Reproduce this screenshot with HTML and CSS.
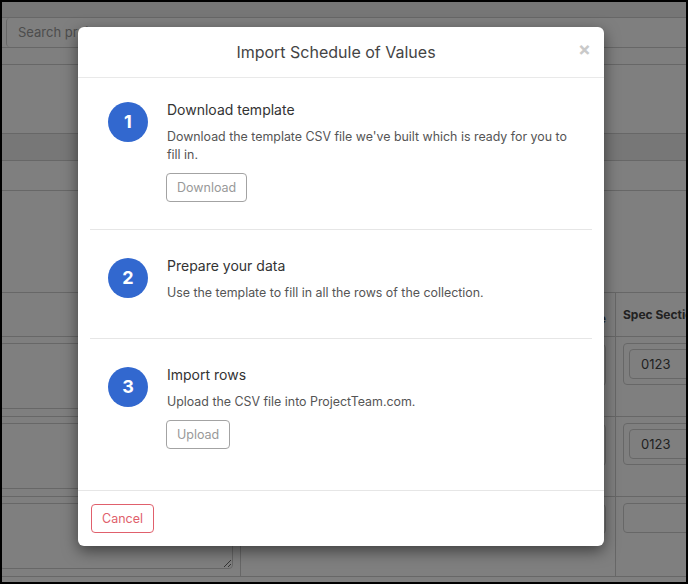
FILE: index.html
```html
<!DOCTYPE html>
<html lang="en">
<head>
    <meta charset="UTF-8">
    <meta name="viewport" content="width=device-width, initial-scale=1.0">
    <title>Schedule of Values</title>
    <link rel="stylesheet" href="styles.css">
</head>
<body>
    <div class="frame">
        <div class="page">
            <div class="topbar"></div>
            <div class="toolbar">
                <div class="search">Search projects</div>
            </div>
            <div class="strip"></div>
            <div class="summary"></div>
            <div class="subbar"></div>
            <div class="tabs"></div>
            <div class="filler"></div>
            <div class="table">
                <div class="row head">
                    <div class="cell col-desc"></div>
                    <div class="cell col-value">Scheduled Value</div>
                    <div class="cell col-spec">Spec Section</div>
                </div>
                <div class="row">
                    <div class="cell col-desc"><textarea class="area"></textarea></div>
                    <div class="cell col-value"><div class="box tall"></div></div>
                    <div class="cell col-spec"><div class="box tall"><div class="inner">0123</div></div></div>
                </div>
                <div class="row">
                    <div class="cell col-desc"><textarea class="area"></textarea></div>
                    <div class="cell col-value"><div class="box tall"></div></div>
                    <div class="cell col-spec"><div class="box tall"><div class="inner">0123</div></div></div>
                </div>
                <div class="row">
                    <div class="cell col-desc"><textarea class="area"></textarea></div>
                    <div class="cell col-value"><div class="box"></div></div>
                    <div class="cell col-spec"><div class="box"></div></div>
                </div>
            </div>
        </div>
        <div class="overlay"></div>
    </div>

    <div class="modal">
        <div class="modal-header">
            <h2 class="modal-title">Import Schedule of Values</h2>
            <span class="close">&times;</span>
        </div>
        <div class="modal-body">
            <div class="step first">
                <div class="num">1</div>
                <div class="step-text">
                    <h3>Download template</h3>
                    <p>Download the template CSV file we've built which is ready for you to fill in.</p>
                    <button class="btn">Download</button>
                </div>
            </div>
            <div class="step">
                <div class="num">2</div>
                <div class="step-text">
                    <h3>Prepare your data</h3>
                    <p>Use the template to fill in all the rows of the collection.</p>
                </div>
            </div>
            <div class="step last">
                <div class="num">3</div>
                <div class="step-text">
                    <h3>Import rows</h3>
                    <p>Upload the CSV file into ProjectTeam.com.</p>
                    <button class="btn">Upload</button>
                </div>
            </div>
        </div>
        <div class="modal-footer">
            <button class="btn btn-cancel">Cancel</button>
        </div>
    </div>
</body>
</html>
```

FILE: styles.css
```css
body {
    margin: 0;
    font-family: Inter, "Noto Sans", sans-serif;
    background-color: #000;
}

.frame {
    position: relative;
    height: 584px;
    border: 2px solid #000;
    box-sizing: border-box;
    overflow: hidden;
    background-color: #fff;
}

.page {
    height: 100%;
}

.topbar {
    height: 15px;
    background-color: #ececec;
    border-bottom: 1px solid #cfcfcf;
}

.toolbar {
    height: 29px;
    border-bottom: 1px solid #cfcfcf;
    padding-left: 4px;
}

.search {
    width: 420px;
    height: 29px;
    box-sizing: border-box;
    border-left: 1px solid #cfcfcf;
    border-radius: 4px;
    padding-left: 11px;
    font-size: 13px;
    line-height: 29px;
    color: #9a9a9a;
}

.strip {
    height: 16px;
    border-bottom: 1px solid #cfcfcf;
}

.summary {
    height: 68px;
    border-bottom: 1px solid #cfcfcf;
}

.subbar {
    height: 26px;
    background-color: #efefef;
    border-bottom: 1px solid #cfcfcf;
}

.tabs {
    height: 29px;
    border-bottom: 1px solid #cfcfcf;
}

.filler {
    height: 101px;
    border-bottom: 1px solid #cfcfcf;
}

.row {
    display: flex;
    height: 79px;
    border-bottom: 1px solid #cfcfcf;
}

.row.head {
    height: 43px;
    font-size: 12px;
    font-weight: 700;
    color: #444;
}

.row.head .cell {
    display: flex;
    align-items: center;
    white-space: nowrap;
    overflow: hidden;
}

.cell {
    box-sizing: border-box;
    flex-shrink: 0;
}

.col-desc {
    width: 239px;
    padding: 6px 7px 0 0;
    border-right: 1px solid #cfcfcf;
}

.col-value {
    width: 375px;
    padding: 7px 9px 0 0;
    border-right: 1px solid #cfcfcf;
    justify-content: flex-end;
}

.col-spec {
    width: 120px;
    padding: 6px 0 0 7px;
}

.row.head .col-spec {
    padding: 0 0 0 7px;
}

.area {
    display: block;
    width: calc(100% + 3px);
    height: 66px;
    box-sizing: border-box;
    margin: 0 0 0 -3px;
    border: 1px solid #cfcfcf;
    border-radius: 4px;
    resize: vertical;
}

.box {
    height: 30px;
    box-sizing: border-box;
    border: 1px solid #cfcfcf;
    border-radius: 4px;
}

.box.tall {
    height: 42px;
    padding: 5px 0 0 5px;
}

.inner {
    height: 30px;
    box-sizing: border-box;
    border: 1px solid #cfcfcf;
    border-radius: 4px;
    padding-left: 11px;
    font-size: 13px;
    line-height: 28px;
    color: #444;
}

.overlay {
    position: absolute;
    top: 0;
    left: 0;
    right: 0;
    bottom: 0;
    background-color: rgba(0, 0, 0, 0.5);
}

.modal {
    position: absolute;
    top: 27px;
    left: 78px;
    width: 526px;
    background-color: #fff;
    border-radius: 6px;
    box-shadow: 0 5px 15px rgba(0, 0, 0, 0.5);
}

.modal-header {
    display: flex;
    align-items: center;
    height: 50px;
    padding: 0 14px 0 16px;
    border-bottom: 1px solid #e9e9e9;
}

.modal-title {
    flex: 1;
    margin: 0;
    text-align: center;
    font-size: 16px;
    font-weight: 400;
    color: #444;
}

.close {
    width: 12px;
    margin-bottom: 5px;
    font-size: 19px;
    font-weight: 700;
    line-height: 1;
    color: #c9c9c9;
    text-align: center;
}

.modal-body {
    padding: 0 12px 14px;
}

.step {
    display: flex;
    gap: 18px;
    padding: 26px 14px 27px 18px;
    border-bottom: 1px solid #e6e6e6;
}

.step.first {
    padding-top: 22px;
}

.step.last {
    border-bottom: none;
}

.num {
    flex-shrink: 0;
    width: 40px;
    height: 40px;
    margin-top: 2px;
    border-radius: 50%;
    background-color: #3268cf;
    color: #fff;
    font-size: 18px;
    font-weight: 700;
    line-height: 40px;
    text-align: center;
}

.step-text h3 {
    margin: 0 0 8px 1px;
    font-size: 14px;
    font-weight: 400;
    line-height: 20px;
    color: #333;
}

.step-text p {
    margin: 0 0 9px 1px;
    font-size: 12.4px;
    line-height: 18px;
    color: #555;
}

.btn {
    display: block;
    height: 29px;
    padding: 0 10px;
    background-color: #fff;
    border: 1px solid #a3a3a3;
    border-radius: 4px;
    font-family: Inter, "Noto Sans", sans-serif;
    font-size: 12.5px;
    color: #999;
    cursor: pointer;
}

.modal-footer {
    padding: 13px 13px;
    border-top: 1px solid #e6e6e6;
}

.btn-cancel {
    border-color: #e0606c;
    color: #e0606c;
}
```
